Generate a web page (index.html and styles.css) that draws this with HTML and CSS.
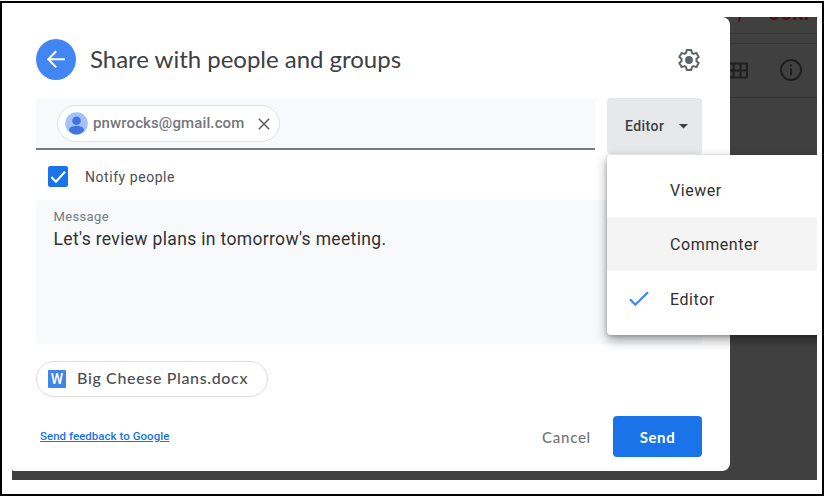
FILE: index.html
```html
<!DOCTYPE html>
<html lang="en">
<head>
<meta charset="utf-8">
<title>Share with people and groups</title>
<link rel="stylesheet" href="styles.css">
</head>
<body>
<div class="frame">
  <div class="stage">
    <main class="dialog">
      <header class="header">
        <button class="back" aria-label="Back">
          <svg width="40" height="41" viewBox="0 0 40 41"><path d="M29 20.3H12.5M20.2 12.2 12.2 20.3l8 8.1" fill="none" stroke="#fff" stroke-width="2"/></svg>
        </button>
        <h1 class="title">Share with people and groups</h1>
        <svg class="gear" width="24" height="24" viewBox="0 0 24 24"><path d="M9.7 2h4.6l.6 2.9 1.7 1 2.8-1 2.3 4-2.2 1.9v2.4l2.2 1.9-2.3 4-2.8-1-1.7 1-.6 2.9H9.7l-.6-2.900-1.700-1-2.800 1-2.300-4 2.200-1.900v-2.400L2.300 8.900l2.300-4 2.800 1 1.700-1z" fill="none" stroke="#5f6368" stroke-width="2" stroke-linejoin="round"/><circle cx="12" cy="12" r="3.900" fill="#5f6368"/></svg>
      </header>
      <section class="recipients">
        <div class="people">
          <div class="chip">
            <svg class="avatar" width="23" height="23" viewBox="0 0 23 23"><circle cx="11.500" cy="11.500" r="11.300" fill="#a1c2fa"/><circle cx="11.500" cy="8.800" r="4.300" fill="#4174e0"/><path d="M4 18.200c0-3 3.200-4.200 7.500-4.200s7.500 1.200 7.500 4.200c-1.400 2.500-4.400 4.300-7.500 4.300S5.400 20.700 4 18.200z" fill="#4174e0"/></svg>
            <span class="email">pnwrocks@gmail.com</span>
            <svg class="remove" width="12" height="12" viewBox="0 0 12 12"><path d="m.8.800 10.400 10.400m0-10.400L.8 11.200" fill="none" stroke="#5f6368" stroke-width="1.600"/></svg>
          </div>
        </div>
        <div class="role">
          <button class="role-button"><span class="role-label">Editor</span><svg width="9" height="5" viewBox="0 0 9 5"><path d="M0 0h9L4.500 4.500z" fill="#3c4043"/></svg></button>
          <ul class="menu">
            <li class="item"><span class="tick"></span>Viewer</li>
            <li class="item hover"><span class="tick"></span>Commenter</li>
            <li class="item last"><span class="tick"><svg width="20" height="16" viewBox="0 0 20 16"><path d="M1 8.300 6.300 13.700 19 1.200" fill="none" stroke="#4285f4" stroke-width="2.300"/></svg></span>Editor</li>
          </ul>
        </div>
      </section>
      <label class="notify">
        <svg width="20" height="21" viewBox="0 0 20 21"><rect width="20" height="21" rx="2" fill="#1a73e8"/><path d="m3.300 11 4.600 4.700L17 5.800" fill="none" stroke="#fff" stroke-width="2.200"/></svg>
        <span class="notify-label">Notify people</span>
      </label>
      <section class="message">
        <div class="message-label">Message</div>
        <div class="message-text">Let's review plans in tomorrow's meeting.</div>
      </section>
      <div class="file"><span class="word">W</span><span class="file-name">Big Cheese Plans.docx</span></div>
      <footer class="footer">
        <a class="feedback" href="#">Send feedback to Google</a>
        <button class="cancel">Cancel</button>
        <button class="send">Send</button>
      </footer>
    </main>
    <aside class="backdrop">
      <div class="banner"><span class="slash">/</span><span class="brand">CORPE</span></div>
      <div class="rule"></div>
      <div class="tools">
        <svg width="18" height="17" viewBox="0 0 18 17"><path d="M-2 1.500h19v14H-2M-2 8.500h19M3.500 1v15M10.500 1v15" fill="none" stroke="#1f1f1f" stroke-width="2"/></svg>
        <svg width="22" height="22" viewBox="0 0 22 22"><circle cx="11" cy="11" r="10" fill="none" stroke="#1f1f1f" stroke-width="2"/><path d="M11 9.500v7M11 5.500v2" fill="none" stroke="#1f1f1f" stroke-width="2"/></svg>
      </div>
    </aside>
  </div>
</div>
</body>
</html>
```
FILE: styles.css
```css
* { box-sizing: border-box; }
body { margin: 0; padding-top: 1px; background: #fff; font-family: Roboto, sans-serif; overflow: hidden; }
button { border: 0; padding: 0; background: none; font: inherit; }

.frame { width: 824px; height: 495px; padding: 14px 0 0 10px; border: 2px solid #000; }
.stage { display: flex; align-items: flex-start; width: 805px; height: 463px; overflow: hidden; background: #404040; }
.dialog { flex: none; width: 718px; height: 454px; padding: 22px 28px 0 24px; background: #fff; border-radius: 0 8px 8px 2px; }

.header { display: flex; align-items: center; height: 41px; }
.back { width: 40px; height: 41px; border-radius: 50%; background: #4285f4; }
.back svg { display: block; }
.title { flex: 1; margin: 0 0 2px 14px; font: 400 24px/32px Lato, sans-serif; letter-spacing: -0.02px; color: #3c4043; white-space: nowrap; }
.gear { margin-right: 1px; }

.recipients { display: flex; gap: 12px; margin-top: 18px; }
.people { display: flex; width: 559px; height: 52px; padding: 7px 0 0 21px; background: #f8f9fa; border-bottom: 2px solid #76797e; border-radius: 4px 4px 0 0; }
.chip { display: flex; align-items: center; width: 223px; height: 37px; padding-left: 8px; background: #fff; border: 1px solid #dfe1e5; border-radius: 19px; }
.avatar { margin-left: -1px; }
.email { width: 165px; margin: 0 0 1px 5px; font-size: 15px; font-weight: 500; letter-spacing: 0.12px; color: #74777c; }
.role { position: relative; }
.role-button { display: flex; align-items: center; width: 95px; height: 56px; padding-left: 18px; border-radius: 4px; background: #e6e8ea; color: #3c4043; font-size: 14px; font-weight: 500; letter-spacing: 0.45px; }
.role-label { width: 54px; text-align: left; }

.menu { position: absolute; left: 0; top: 57px; width: 230px; height: 180px; margin: 0; padding: 8px 0 0; list-style: none; background: #fff; border-radius: 4px; box-shadow: 0 5px 12px rgba(0,0,0,.36), 0 1px 4px rgba(0,0,0,.2); }
.item { display: flex; align-items: center; height: 54px; font-size: 16px; letter-spacing: 0.55px; color: #313131; }
.item.hover { background: #f4f4f4; }
.item.last { height: 56px; }
.tick { display: flex; width: 63px; padding-left: 22px; }

.notify { display: flex; align-items: center; gap: 17px; margin: 12px 0 13px 12px; height: 21px; font-size: 14px; letter-spacing: 0.55px; color: #4b4e52; }
.message { height: 144px; padding: 9px 17.5px; background: #f8f9fa; border-radius: 4px; }
.message-label { font-size: 13px; line-height: 16px; letter-spacing: 0.35px; color: #777b80; }
.message-text { margin-top: 3px; font-size: 17.5px; line-height: 22px; letter-spacing: 0.34px; color: #303134; }

.file { display: flex; align-items: center; width: 232px; height: 36px; margin-top: 17px; padding-left: 11px; border: 1px solid #dadce0; border-radius: 18px; }
.word { width: 18px; height: 18px; border-radius: 1px; background: #4285e8; color: #fff; font-size: 14px; font-weight: 500; line-height: 18px; text-align: center; }
.file-name { margin: 0 0 2px 11px; font: 500 16px/20px Lato, sans-serif; letter-spacing: 0.65px; color: #4b4e52; }

.footer { display: flex; align-items: center; height: 41px; margin-top: 19px; padding-left: 4px; }
.feedback { flex: 1; margin-bottom: 1px; font-size: 11.5px; font-weight: 500; letter-spacing: 0.03px; color: #1a73e8; }
.cancel { width: 49px; margin: 0 22px 0 0; font: 500 15px/20px Lato, sans-serif; letter-spacing: 0.75px; color: #70757a; text-align: left; }
.send { width: 89px; height: 41px; border-radius: 4px; background: #1a73e8; color: #fff; font: 700 15px/20px Lato, sans-serif; letter-spacing: 0.6px; }

.backdrop { flex: 1; height: 81px; border-bottom: 1px solid #333; }
.banner { display: flex; align-items: flex-end; height: 17px; padding: 0 0 9px 8px; overflow: hidden; border-bottom: 1px solid #363636; color: #580b14; font-size: 18px; line-height: 20px; font-weight: 900; }
.slash { width: 30px; }
.rule { height: 10px; border-bottom: 1px solid #363636; }
.tools { display: flex; align-items: center; gap: 32px; height: 52px; }
```
